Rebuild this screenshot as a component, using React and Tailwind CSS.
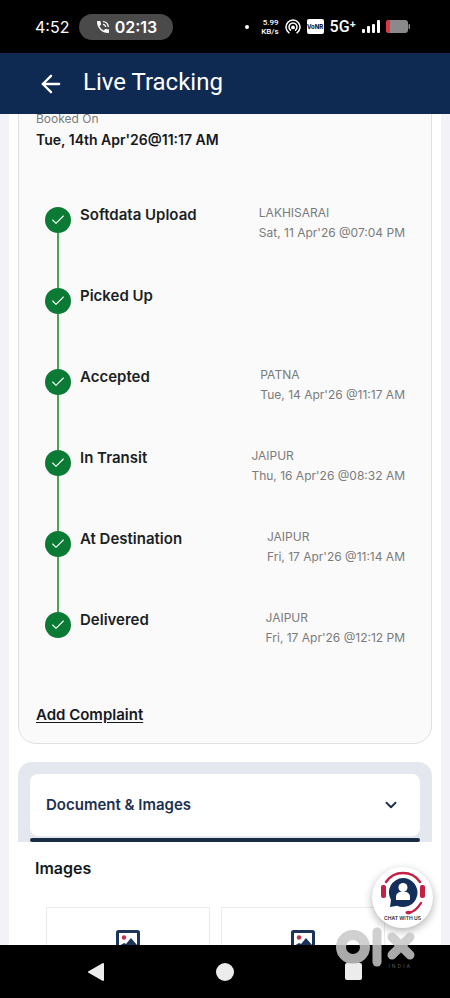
import { ArrowLeft, Check, ChevronDown } from 'lucide-react'
import { MdPhoneInTalk } from 'react-icons/md'

const steps = [
  { title: 'Softdata Upload', place: 'LAKHISARAI', time: "Sat, 11 Apr'26 @07:04 PM" },
  { title: 'Picked Up' },
  { title: 'Accepted', place: 'PATNA', time: "Tue, 14 Apr'26 @11:17 AM" },
  { title: 'In Transit', place: 'JAIPUR', time: "Thu, 16 Apr'26 @08:32 AM" },
  { title: 'At Destination', place: 'JAIPUR', time: "Fri, 17 Apr'26 @11:14 AM" },
  { title: 'Delivered', place: 'JAIPUR', time: "Fri, 17 Apr'26 @12:12 PM" },
]

function StatusBar() {
  return (
    <div className="h-[53px] shrink-0 bg-black text-white flex items-center justify-between pl-[35px] pr-10">
      <div className="flex items-center gap-2">
        <span className="w-9 text-base whitespace-nowrap">4:52</span>
        <span className="flex items-center justify-center gap-1 w-[94px] h-[26px] rounded-full bg-[#4a4a4a] text-base font-semibold">
          <MdPhoneInTalk className="size-4" />
          02:13
        </span>
      </div>
      <div className="flex items-center gap-1.5">
        <span className="size-1 rounded-full bg-white mr-1.5" />
        <span className="flex flex-col items-end text-[8px] leading-[9px] font-medium font-['Roboto',sans-serif]">
          <span>5.99</span>
          <span>KB/s</span>
        </span>
        <svg className="size-4" viewBox="0 0 16 16" fill="none" stroke="currentColor" strokeWidth="1.5" strokeLinecap="round">
          <path d="M4 13.8A7 7 0 1 1 12 13.8" />
          <path d="M5.5 11.2A4 4 0 1 1 10.5 11.2" />
          <circle cx="8" cy="8.4" r="1.2" fill="currentColor" />
        </svg>
        <span className="w-[17px] h-[15px] rounded-xs bg-white text-black text-[6px] font-bold flex items-center justify-center">
          VoNR
        </span>
        <span className="text-base leading-4 whitespace-nowrap font-medium font-['Roboto',sans-serif]">5G⁺</span>
        <svg className="w-[18px] h-[14px]" viewBox="0 0 18 14" fill="currentColor">
          <rect x="0" y="9" width="3" height="4" rx="1" />
          <rect x="5" y="6" width="3" height="7" rx="1" />
          <rect x="10" y="4" width="3" height="9" rx="1" />
          <rect x="15" y="0" width="3" height="13" rx="1" />
        </svg>
        <svg className="w-6 h-[13px]" viewBox="0 0 24 13">
          <rect width="22" height="13" rx="3" fill="#8a8a8a" />
          <path d="M3 0h1v13H3a3 3 0 0 1-3-3V3a3 3 0 0 1 3-3z" fill="#e03643" />
          <rect x="22.5" y="4" width="1.5" height="5" rx="0.7" fill="#8a8a8a" />
        </svg>
      </div>
    </div>
  )
}

function Step({ step, last }) {
  return (
    <li className={last ? 'flex' : 'flex h-[81px]'}>
      <div className="flex flex-col items-center w-[26px] mr-[9px]">
        <span className="size-[26px] shrink-0 rounded-full bg-[#0b7a35] text-white flex items-center justify-center">
          <Check className="size-4" strokeWidth={1.6} />
        </span>
        {!last && <span className="w-0.5 flex-1 bg-[#4ca354]" />}
      </div>
      <div className="flex-1 flex justify-between items-start">
        <h3 className="text-[15px] leading-4 font-semibold text-[#1b1f24]">{step.title}</h3>
        {step.place && (
          <div className="text-xs leading-5 -mt-1 text-[#7b7b7b]">
            <p>{step.place}</p>
            <p>{step.time}</p>
          </div>
        )}
      </div>
    </li>
  )
}

function ImageIcon() {
  return (
    <svg className="size-6" viewBox="0 0 24 24">
      <rect x="1.5" y="1.5" width="21" height="21" rx="1" fill="#fff" stroke="#1c335a" strokeWidth="3" />
      <circle cx="8" cy="7.5" r="2.2" fill="#c8304a" />
      <path d="M3 20v-4l5-3 2 1 5-6 6 7v5z" fill="#1c335a" />
    </svg>
  )
}

function ChatButton() {
  return (
    <button
      type="button"
      className="absolute right-[17px] bottom-[17px] size-[61px] rounded-full bg-white shadow-[0_3px_8px_rgba(0,0,0,0.3)] flex flex-col items-center pt-1"
    >
      <svg className="w-[46px] h-[44px]" viewBox="0 0 46 44" fill="none">
        <path d="M6 11C14-1 32-1 40 11" stroke="#c41f45" strokeWidth="2.4" strokeLinecap="round" />
        <rect x="1" y="14" width="5" height="13" rx="2" fill="#c41f45" />
        <rect x="40" y="14" width="5" height="13" rx="2" fill="#c41f45" />
        <path d="M41 32C38 37 34 41 28 42" stroke="#c41f45" strokeWidth="2.4" strokeLinecap="round" />
        <ellipse cx="28.5" cy="41.5" rx="3" ry="1.8" fill="#c41f45" />
        <path d="M23 7a14.500 14.500 0 1 1-6 27.700L10 36l1-7A14.500 14.500 0 0 1 23 7z" fill="#14305a" />
        <circle cx="23" cy="16.500" r="4.500" fill="#fff" />
        <path d="M16 29v-3c0-3 2-5 5-5h4c3 0 5 2 5 5v3z" fill="#fff" />
      </svg>
      <span className="text-[5px] leading-[6px] font-semibold text-[#1d2733] whitespace-nowrap">CHAT WITH US</span>
    </button>
  )
}

function Watermark() {
  return (
    <div className="absolute right-[34px] bottom-[29px] w-20 text-[#c8c8c8] opacity-85 pointer-events-none">
      <svg className="w-20 h-10" viewBox="0 0 80 40" fill="none" stroke="currentColor" strokeLinecap="round">
        <circle cx="17" cy="20" r="12" strokeWidth="10" />
        <path d="M41 5v30" strokeWidth="9" />
        <path d="M56 10l18 18M74 10L56 28" strokeWidth="9" />
      </svg>
      <p className="text-[5px] leading-[6px] -mt-1 pr-1 text-right tracking-[2px] text-[#6b6b6b]">INDIA</p>
    </div>
  )
}

export default function App() {
  return (
    <div className="relative h-screen flex flex-col overflow-hidden bg-white font-['Inter','Liberation_Sans',sans-serif]">
      <StatusBar />

      <header className="h-[61px] shrink-0 bg-[#0f2a52] text-white flex items-center gap-[18px] px-[37px]">
        <button type="button" aria-label="Back">
          <ArrowLeft className="size-7" />
        </button>
        <h1 className="text-2xl leading-7 pb-1 font-['Roboto','Inter',sans-serif]">Live Tracking</h1>
      </header>

      <div className="relative flex-1 min-h-0">
        <main className="h-full overflow-hidden bg-white border-x-9 border-[#f2f2f8] px-[9px]">
          <section className="-mt-5 pt-4 px-[17px] pb-[18px] bg-[#fafafa] border border-[#dfe0e3] rounded-[18px]">
            <p className="text-xs leading-4 text-[#7b7b7b]">Booked On</p>
            <p className="mt-[3px] text-sm leading-5 font-semibold text-[#15191e]">Tue, 14th Apr'26@11:17 AM</p>
            <ol className="mt-[57px] pl-[9px] pr-[9px]">
              {steps.map((step, i) => (
                <Step key={step.title} step={step} last={i === steps.length - 1} />
              ))}
            </ol>
            <a href="#complaint" className="block w-fit mt-[57px] text-[15px] leading-5 font-semibold text-[#15191e] underline underline-offset-2">
              Add Complaint
            </a>
          </section>

          <section className="mt-[18px]">
            <div className="bg-[#e4e8ee] rounded-t-[14px] px-3 pt-3">
              <button
                type="button"
                className="w-full h-[62px] px-4 bg-white rounded-lg flex items-center justify-between text-[15px] font-semibold text-[#1d3050]"
              >
                Document & Images
                <ChevronDown className="size-[18px] mr-1" strokeWidth={2.5} />
              </button>
              <div className="mt-0.5 h-1 rounded-full bg-[#192d42]" />
            </div>
            <div className="px-[17px] pt-4">
              <h2 className="text-base leading-5 font-semibold text-[#15191e]">Images</h2>
              <div className="mt-[29px] ml-[11px] mr-[30px] grid grid-cols-2 gap-[11px]">
                <div className="h-[120px] border border-[#ebebed] pt-[22px] flex justify-center">
                  <ImageIcon />
                </div>
                <div className="h-[120px] border border-[#ebebed] pt-[22px] flex justify-center">
                  <ImageIcon />
                </div>
              </div>
            </div>
          </section>
        </main>
        <ChatButton />
      </div>

      <nav className="h-[53px] shrink-0 bg-black flex items-center justify-center gap-[111px] pr-0.5 text-[#ececec]">
        <button type="button" aria-label="Previous">
          <svg className="size-[18px]" viewBox="0 0 18 18" fill="currentColor" stroke="currentColor" strokeWidth="2" strokeLinejoin="round">
            <path d="M16 1v16L2 9z" />
          </svg>
        </button>
        <button type="button" aria-label="Home" className="size-[18px] rounded-full bg-[#ececec]" />
        <button type="button" aria-label="Recent apps" className="size-[17px] rounded-xs bg-[#ececec]" />
      </nav>
      <Watermark />
    </div>
  )
}
